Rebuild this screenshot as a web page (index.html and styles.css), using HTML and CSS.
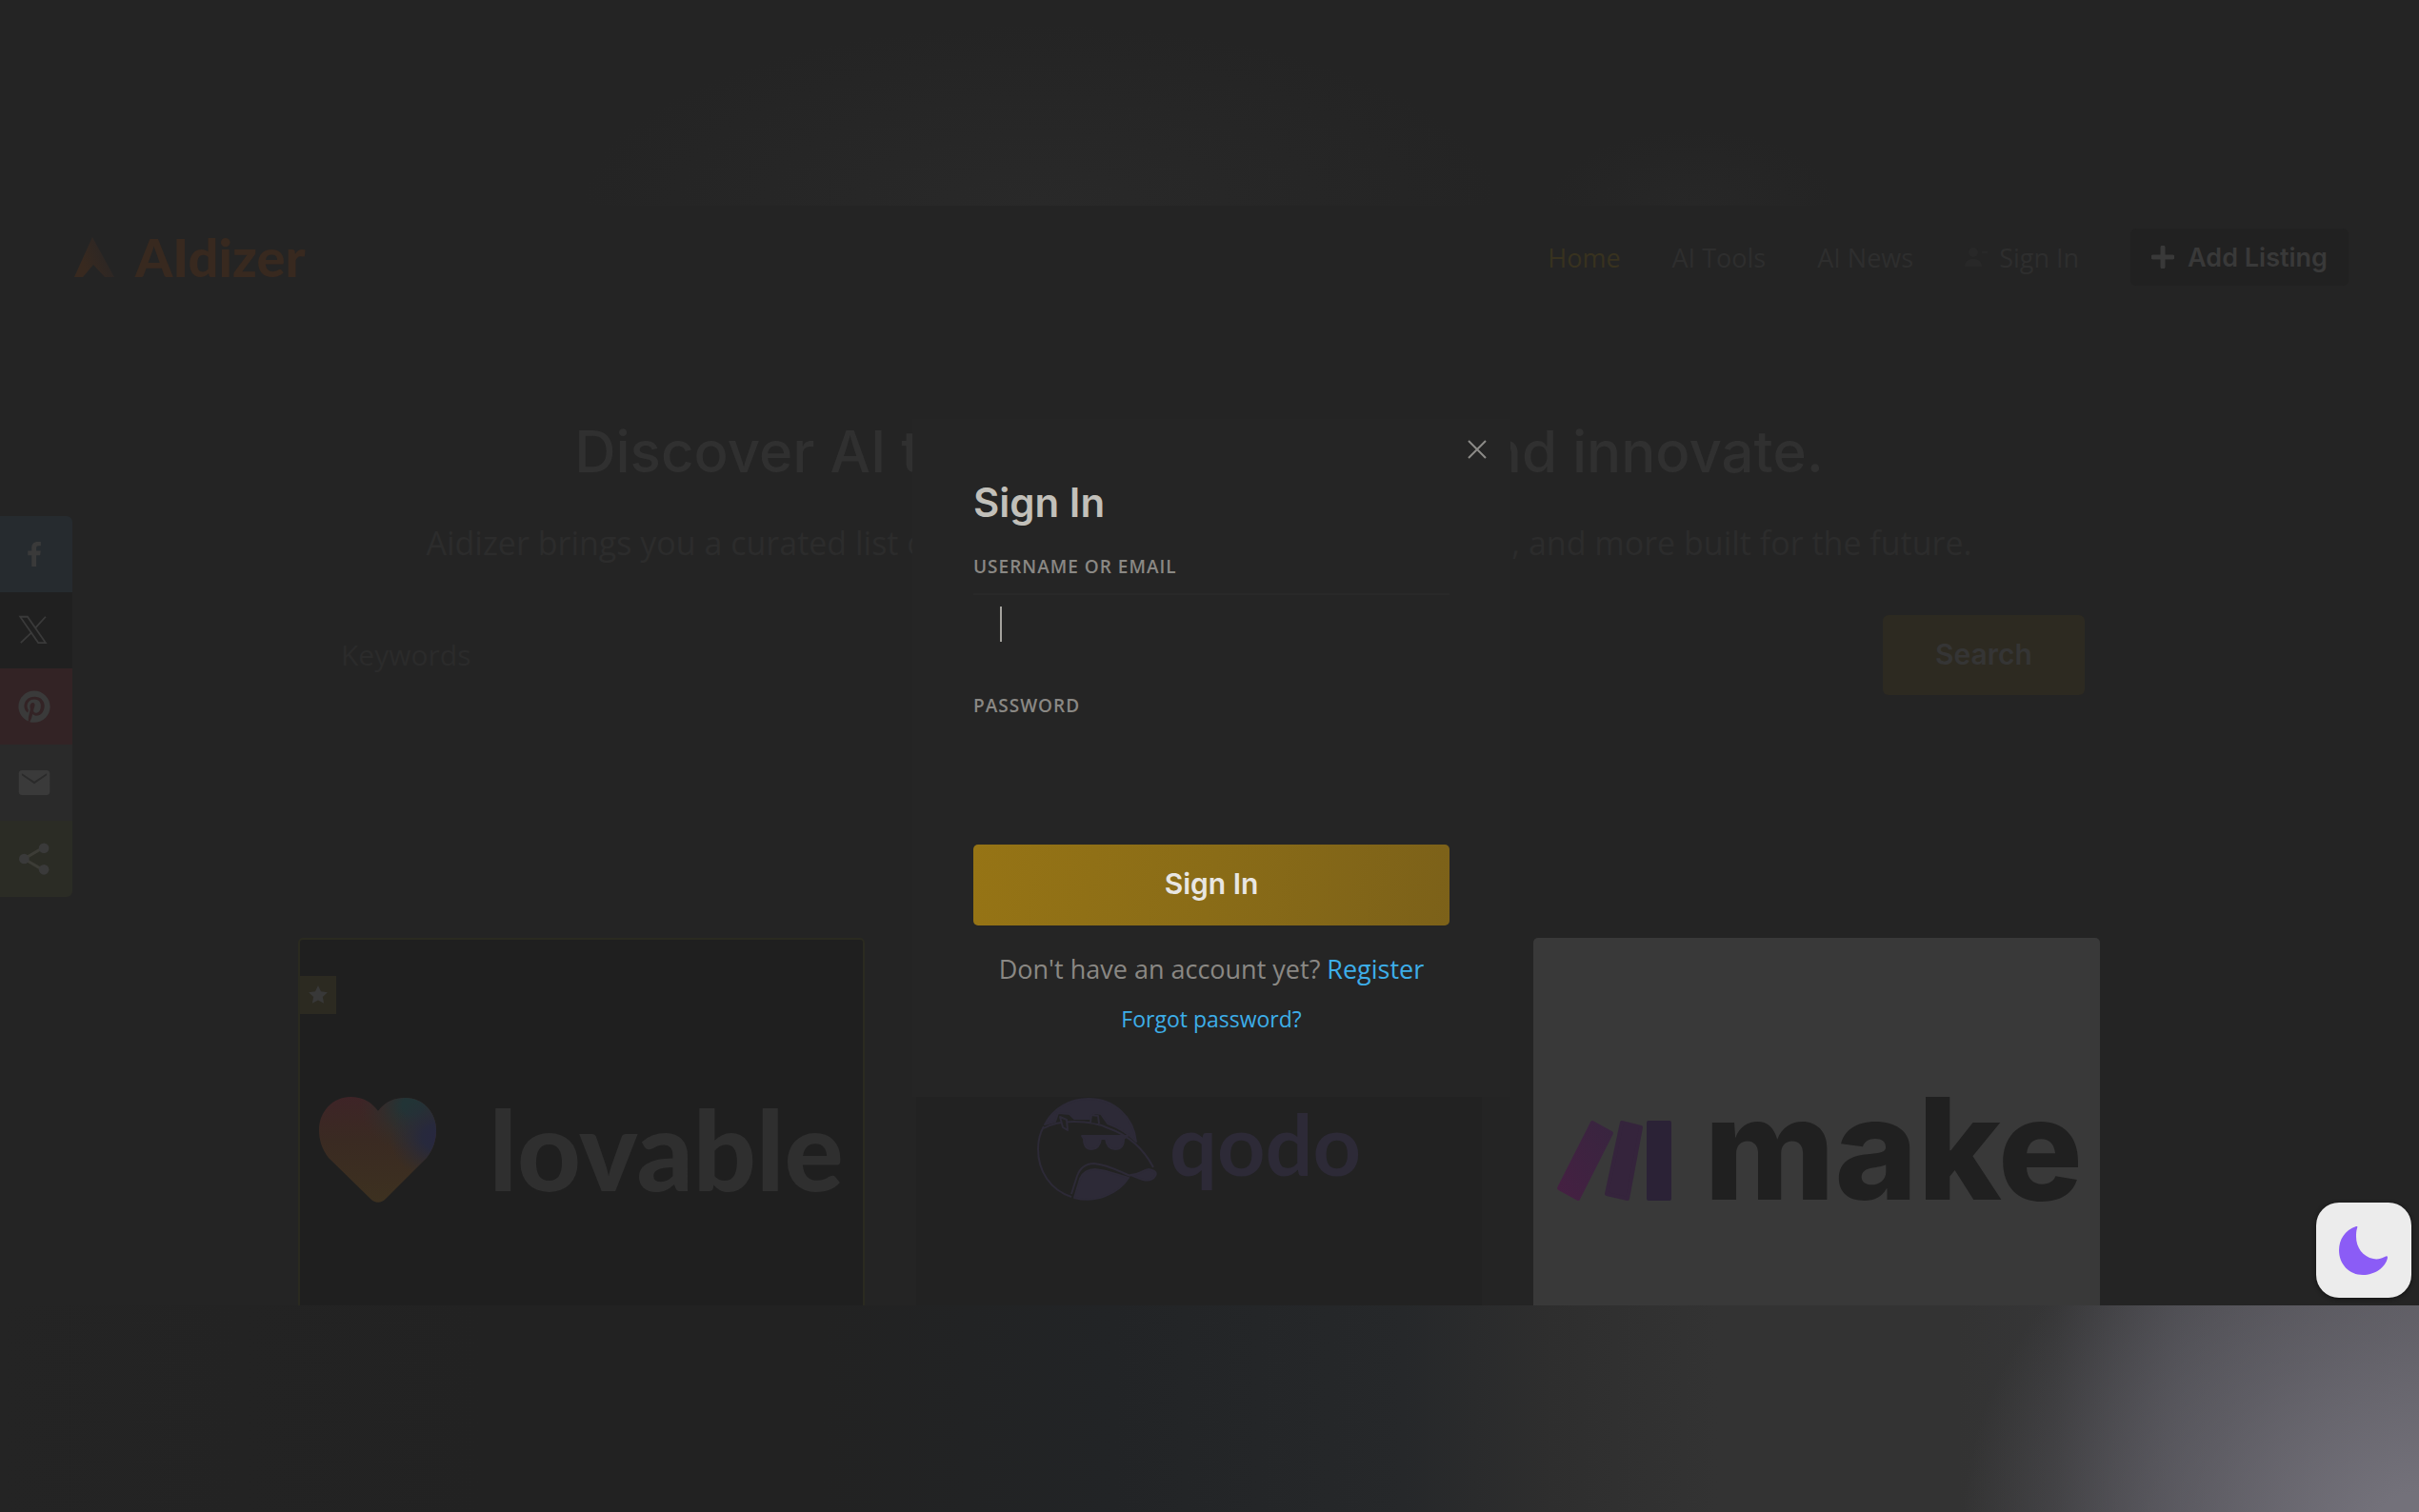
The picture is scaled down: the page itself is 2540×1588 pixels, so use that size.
FILE: index.html
```html
<!DOCTYPE html>
<html lang="en">
<head>
  <meta charset="UTF-8">
  <meta name="viewport" content="width=device-width, initial-scale=1.0">
  <title>AIdizer</title>
  <link rel="stylesheet" href="styles.css">
</head>
<body>
  <div class="site">
    <header class="header">
      <a href="#" class="logo">
        <svg width="42" height="42" viewBox="0 0 42 42" aria-hidden="true">
          <defs>
            <linearGradient id="mark" x1="0" y1="1" x2="1" y2="0.6">
              <stop offset="0.3" stop-color="#38291f"/>
              <stop offset="1" stop-color="#2a2625"/>
            </linearGradient>
          </defs>
          <path d="M19 0 L42 42 H32 L20 29 L9 42 H0 Z" fill="url(#mark)"/>
        </svg>
        <span>AIdizer</span>
      </a>
      <nav class="nav">
        <a href="#" class="active">Home</a>
        <a href="#">AI Tools</a>
        <a href="#">AI News</a>
        <a href="#" class="account">
          <svg width="24" height="24" viewBox="0 0 24 24" aria-hidden="true"><circle cx="9" cy="7" r="5"/><path d="M0 22c0-6 4-8 9-8s9 2 9 8zM18 6h6v2h-6z"/></svg>
          Sign In
        </a>
        <a href="#" class="add-listing">
          <svg width="24" height="24" viewBox="0 0 24 24" aria-hidden="true"><path d="M12 2v20M2 12h20"/></svg>
          Add Listing
        </a>
      </nav>
    </header>

    <main class="main">
      <h1>Discover AI tools to plan, create and innovate.</h1>
      <p class="subtitle">Aidizer brings you a curated list of AI tools, assistants, prompts, tutorials, and more built for the future.</p>

      <form class="search">
        <input type="text" name="keywords" placeholder="Keywords" aria-label="Keywords">
        <button type="submit">Search</button>
      </form>

      <div class="cards">
        <article class="card featured">
          <span class="badge">
            <svg width="22" height="22" viewBox="0 0 24 24" aria-hidden="true"><path d="M12 1l3.3 6.9 7.5 1-5.500 5.200 1.400 7.500L12 18l-6.700 3.600 1.400-7.500L1.200 8.900l7.500-1z"/></svg>
          </span>
          <svg width="123" height="111" viewBox="0 0 123 111" aria-hidden="true">
            <defs>
              <linearGradient id="heart" x1="0" y1="0" x2="0" y2="1">
                <stop offset="0" stop-color="#3e2427"/>
                <stop offset="0.4" stop-color="#3a2a22"/>
                <stop offset="1" stop-color="#3d3120"/>
              </linearGradient>
              <radialGradient id="heart-teal" cx="0.8" cy="0.08" r="0.45">
                <stop offset="0.2" stop-color="#223436"/>
                <stop offset="1" stop-color="#33302a" stop-opacity="0"/>
              </radialGradient>
              <radialGradient id="heart-blue" cx="1" cy="0.38" r="0.4">
                <stop offset="0" stop-color="#27273f"/>
                <stop offset="0.3" stop-color="#27293c"/>
                <stop offset="1" stop-color="#2b2d35" stop-opacity="0"/>
              </radialGradient>
            </defs>
            <path d="M62 15C70 4 80 1 91 1c18 0 32 15 32 34 0 10-3 20-10 29L70 107c-5 5-11 5-16 0L10 64C3 55 0 45 0 35 0 15 15 0 33 0c12 0 22 5 29 15z" fill="url(#heart)"/>
            <path d="M62 15C70 4 80 1 91 1c18 0 32 15 32 34 0 10-3 20-10 29L70 107c-5 5-11 5-16 0L10 64C3 55 0 45 0 35 0 15 15 0 33 0c12 0 22 5 29 15z" fill="url(#heart-teal)"/>
            <path d="M62 15C70 4 80 1 91 1c18 0 32 15 32 34 0 10-3 20-10 29L70 107c-5 5-11 5-16 0L10 64C3 55 0 45 0 35 0 15 15 0 33 0c12 0 22 5 29 15z" fill="url(#heart-blue)"/>
          </svg>
          <span class="lovable">lovable</span>
        </article>

        <article class="card centered">
          <svg width="126" height="108" viewBox="0 0 126 108" fill="none" stroke="#2d2a37" stroke-width="2" stroke-linejoin="round" aria-hidden="true">
            <path d="M36 104C14 97 1 77 1 54c0-9 2-17 6-24"/>
            <path fill="#2d2a37" d="M8 28C17 11 34 1 54 1c27 0 47 19 50 45-9-9-19-15-30-19l-7-10-7-1-3 6H39l-5-5-12-1-3 9z"/>
            <path d="M7 32c10-6 20-7 32-7 14 0 26 2 36 7 20 7 36 20 47 41"/>
            <path fill="#222" d="M24 20l7 3 1 11-5-3zM56 26l1-8 7 1 1 8"/>
            <path fill="#2d2a37" d="M47 40h48l-4 3c0 7-3 11-9 11s-9-4-10-11h-5c-1 7-4 11-10 11s-8-5-8-11z"/>
            <path d="M36 101l6-19c3-8 8-13 18-13 13 1 26 8 38 13"/>
            <path fill="#2d2a37" d="M39 105l6-20c3-7 8-10 16-10 12 1 24 6 35 9-11 17-35 27-57 21z"/>
            <path fill="#2d2a37" d="M98 81c9 0 12-5 19-6 7 1 9 4 7 7-3 5-9 5-13 4z"/>
          </svg>
          <span class="qodo">qodo</span>
        </article>

        <article class="card light">
          <svg width="122" height="88" viewBox="0 0 122 88" stroke-width="4" stroke-linejoin="round" aria-hidden="true">
            <defs>
              <linearGradient id="bars" x1="0" y1="1" x2="1" y2="0">
                <stop offset="0" stop-color="#452042"/>
                <stop offset="1" stop-color="#38253f"/>
              </linearGradient>
            </defs>
            <path d="M38 4l20 11-35 69L3 73z" fill="url(#bars)" stroke="url(#bars)"/>
            <path d="M69 4l20 5-14 75-22-5z" fill="#35243c" stroke="#35243c"/>
            <path d="M97 4h22v80H97z" fill="#2b2236" stroke="#2b2236"/>
          </svg>
          <span class="make">make</span>
        </article>
      </div>
    </main>

    <aside class="share">
      <a href="#" class="facebook" aria-label="Facebook"><svg width="38" height="38" viewBox="0 0 32 32"><path d="M17.800 27V17h3.400l.5-4h-3.900v-2.500c0-1.100.4-1.900 2-1.900h2V5.100c-.4 0-1.600-.1-3-.1-3 0-5.100 1.800-5.100 5.200V13h-3.400v4h3.400v10z"/></svg></a>
      <a href="#" class="x" aria-label="X"><svg width="38" height="38" viewBox="0 0 32 32"><path d="M3.500 4H10l16 23h-6.500zM26 4l-9.500 10.500M14 17.500L4 27" fill="none" stroke="#3a3a3a" stroke-width="1.500"/></svg></a>
      <a href="#" class="pinterest" aria-label="Pinterest"><svg width="38" height="38" viewBox="0 0 32 32"><path d="M16 2C8.300 2 2 8.300 2 16c0 5.900 3.700 11 8.900 13-.1-1.100-.2-2.800.1-4l1.600-7s-.4-.8-.4-2c0-1.900 1.100-3.400 2.500-3.400 1.200 0 1.800.9 1.800 2 0 1.200-.8 3-1.200 4.600-.3 1.400.7 2.500 2.100 2.500 2.500 0 4.400-2.600 4.400-6.400 0-3.400-2.400-5.700-5.800-5.700-4 0-6.300 3-6.300 6.100 0 1.200.5 2.500 1 3.200l.1.500-.4 1.600c-.1.300-.2.300-.5.200-1.700-.8-2.800-3.400-2.800-5.400 0-4.400 3.200-8.500 9.300-8.500 4.900 0 8.600 3.500 8.600 8.100 0 4.900-3 8.800-7.300 8.800-1.400 0-2.800-.7-3.200-1.600l-.9 3.400c-.3 1.200-1.200 2.700-1.700 3.600 1.300.4 2.700.6 4.100.6 7.700 0 14-6.300 14-14S23.700 2 16 2z"/></svg></a>
      <a href="#" class="email" aria-label="Email"><svg width="38" height="38" viewBox="0 0 32 32"><path d="M5 5h22c1.600 0 2.700 1.200 2.700 2.700v16.600c0 1.500-1.100 2.700-2.700 2.700H5c-1.600 0-2.700-1.200-2.700-2.700V7.700C2.300 6.200 3.400 5 5 5zm0 4.500l11 7.500 11-7.500v-1.700L16 15 5 7.800z"/></svg></a>
      <a href="#" class="sharethis" aria-label="Share"><svg width="38" height="38" viewBox="0 0 32 32"><path d="M7 16L24 6M7 16l17 10" fill="none" stroke="#3c3c36" stroke-width="2.500"/><circle cx="7" cy="16" r="4.500"/><circle cx="24.500" cy="6.500" r="4.500"/><circle cx="24.500" cy="25.500" r="4.500"/></svg></a>
    </aside>

    <button type="button" class="theme-toggle" aria-label="Toggle dark mode">
      <svg width="52" height="52" viewBox="0 0 52 52" aria-hidden="true"><path d="M18 1C6 5 0 15 0 26c0 15 11 26 25 26 13 0 24-8 26-18 0-2-1-2-3-1-4 2-8 3-12 2-11-2-18-12-18-23 0-3 0-6 1-9 1-2 0-2-1-2z" fill="#8b5cf6"/></svg>
    </button>
  </div>

  <!-- Sign in modal -->
  <div class="overlay">
    <div class="modal" role="dialog" aria-labelledby="modal-title">
      <button type="button" class="close-btn" aria-label="Close">
        <svg width="22" height="22" viewBox="0 0 22 22" aria-hidden="true"><path d="M2 2l18 18M20 2L2 20"/></svg>
      </button>
      <h2 id="modal-title">Sign In</h2>
      <form>
        <div class="field">
          <label for="username">Username or Email</label>
          <input type="text" id="username" name="username" class="focused">
          <span class="caret"></span>
        </div>
        <div class="field">
          <label for="password">Password</label>
          <input type="password" id="password" name="password">
        </div>
        <button type="submit" class="submit">Sign In</button>
      </form>
      <p class="register">Don't have an account yet? <a href="#">Register</a></p>
      <p class="forgot"><a href="#">Forgot password?</a></p>
    </div>
  </div>
</body>
</html>
```

FILE: styles.css
```css
* {
  box-sizing: border-box;
}

body {
  margin: 0;
  height: 100vh;
  padding: 216px 0 217px;
  overflow: hidden;
  font-family: "Open Sans", sans-serif;
  background:
    radial-gradient(480px 190px at 43% 216px, #292929, rgba(36, 36, 36, 0)) top / 100% 216px no-repeat,
    radial-gradient(150px 80px at 70% 216px, #272727, rgba(36, 36, 36, 0)) top / 100% 216px no-repeat,
    radial-gradient(480px 420px at 100% 110%, #73717a 10%, rgba(108, 106, 115, 0.6) 50%, rgba(80, 80, 85, 0)) bottom / 100% 217px no-repeat,
    linear-gradient(90deg, #242424, #222 20%, #222 34%, #222426 46%, #26282a 58%, #2e2e2e 64%, #333 71%, #333 81%, #363637 85%, #454549 90%, #555459) bottom / 100% 217px no-repeat,
    #242424;
}

a {
  text-decoration: none;
}

button {
  cursor: pointer;
}

.site {
  position: relative;
  height: 100%;
  overflow: hidden;
  background-color: #242424;
}

/* Header */
.header {
  display: flex;
  align-items: center;
  justify-content: space-between;
  height: 108px;
  padding: 0 74px 0 78px;
}

.logo {
  display: flex;
  align-items: center;
  gap: 22px;
  font-family: Lato, sans-serif;
  font-size: 56px;
  font-weight: 900;
  line-height: 60px;
  color: #38291f;
}

.nav {
  display: flex;
  align-items: center;
  gap: 54px;
  font-size: 27px;
}

.nav a {
  color: #2e2e2e;
}

.nav .active {
  color: #38321f;
}

.nav .account {
  display: flex;
  align-items: center;
  gap: 12px;
}

.account svg {
  fill: #282828;
}

.nav .add-listing {
  display: flex;
  align-items: center;
  gap: 14px;
  height: 60px;
  padding: 0 22px;
  border-radius: 6px;
  background-color: #212121;
  color: #393939;
  font-family: Inter, sans-serif;
  font-weight: 600;
}

.add-listing svg {
  stroke: #393939;
  stroke-width: 5;
  stroke-linecap: round;
}

/* Hero */
.main {
  padding: 114px 22px 0 0;
  text-align: center;
}

h1 {
  margin: 0;
  font-family: Inter, sans-serif;
  font-size: 60px;
  font-weight: 500;
  line-height: 72px;
  color: #303030;
  white-space: nowrap;
}

.subtitle {
  margin: 36px 0 0;
  font-size: 34px;
  line-height: 48px;
  color: #2c2c2c;
  white-space: nowrap;
}

.search {
  display: flex;
  max-width: 1860px;
  height: 84px;
  margin: 52px auto 0;
}

.search input {
  flex: 1;
  padding: 0 29px 2px;
  border: none;
  outline: none;
  background: transparent;
  font-family: inherit;
  font-size: 30px;
}

.search input::placeholder {
  color: #2b2b2b;
}

.search button {
  width: 212px;
  padding-bottom: 3px;
  border: none;
  border-radius: 6px;
  background-color: #2d2a21;
  color: #353535;
  font-family: Inter, sans-serif;
  font-size: 30px;
  font-weight: 600;
}

/* Cards */
.cards {
  display: grid;
  grid-template-columns: repeat(3, 1fr);
  gap: 54px;
  max-width: 1892px;
  margin: 255px auto 0;
}

.card {
  position: relative;
  display: flex;
  align-items: center;
  justify-content: space-between;
  height: 444px;
  padding: 0 20px;
  border-radius: 5px;
  background-color: #222;
  font-family: Lato, sans-serif;
  line-height: 1;
}

.featured {
  border: 2px solid #2a2a20;
  background-color: #1f1f1f;
}

.centered {
  justify-content: center;
  gap: 13px;
}

.light {
  padding: 0 18px 0 24px;
  background-color: #393939;
}

.light svg {
  margin-top: 24px;
}

.badge {
  position: absolute;
  top: 38px;
  left: 0;
  display: flex;
  align-items: center;
  justify-content: center;
  width: 38px;
  height: 40px;
  background-color: #2c2a21;
}

.badge svg {
  fill: #383838;
}

.lovable {
  font-size: 116px;
  font-weight: 900;
  color: #2f2f2f;
}

.qodo {
  padding-bottom: 12px;
  font-size: 88px;
  font-weight: 700;
  color: #2d2a37;
}

.make {
  font-family: Inter, sans-serif;
  font-size: 148px;
  font-weight: 800;
  color: #202020;
}

/* Share buttons */
.share {
  position: absolute;
  top: 326px;
  left: 0;
  width: 76px;
  border-radius: 0 6px 6px 0;
  overflow: hidden;
}

.share a {
  display: flex;
  align-items: center;
  justify-content: center;
  height: 80px;
  padding-right: 4px;
  fill: #3a3a3a;
}

.facebook {
  background-color: #262b2f;
}

.x {
  background-color: #202020;
}

.pinterest {
  background-color: #332325;
}

.email {
  background-color: #2a2a2a;
}

.sharethis {
  background-color: #2b2c25;
}

.theme-toggle {
  position: absolute;
  right: 8px;
  bottom: 8px;
  display: flex;
  align-items: center;
  justify-content: center;
  width: 100px;
  height: 100px;
  padding: 0;
  border: none;
  border-radius: 24px;
  background-color: #ececec;
  box-shadow: 0 1px 4px #111;
}

/* Modal */
.overlay {
  position: fixed;
  inset: 0;
  display: flex;
  align-items: center;
  justify-content: center;
  padding: 4px 0 0 4px;
  pointer-events: none;
}

.modal {
  position: relative;
  width: 628px;
  padding: 64px;
  background-color: #252525;
  pointer-events: auto;
}

.close-btn {
  position: absolute;
  top: 21px;
  right: 24px;
  display: flex;
  padding: 0;
  border: none;
  background: none;
}

.close-btn svg {
  stroke: #8c8b88;
  stroke-width: 2;
}

.modal h2 {
  margin: 0 0 29px;
  font-family: Inter, sans-serif;
  font-size: 42px;
  font-weight: 600;
  line-height: 48px;
  color: #c2c0ba;
}

.field {
  position: relative;
  margin-bottom: 38px;
}

.field label {
  display: block;
  margin-bottom: 14px;
  font-size: 19px;
  font-weight: 600;
  line-height: 28px;
  letter-spacing: 1px;
  text-transform: uppercase;
  color: #8a8884;
}

.field input {
  display: block;
  width: 100%;
  height: 66px;
  padding: 0 28px;
  border: none;
  border-top: 2px solid transparent;
  outline: none;
  background: transparent;
  color: #c2c0ba;
  font-size: 27px;
}

.field .focused {
  border-color: #292929;
}

.caret {
  position: absolute;
  left: 28px;
  bottom: 15px;
  width: 2px;
  height: 37px;
  background-color: #a5a39e;
}

.submit {
  display: block;
  width: 100%;
  height: 85px;
  margin-top: 52px;
  padding-bottom: 4px;
  border: none;
  border-radius: 5px;
  background: linear-gradient(100deg, #967415, #8a6c17 50%, #7c6119);
  color: #e8e6e3;
  font-family: Inter, sans-serif;
  font-size: 30px;
  font-weight: 600;
}

.register,
.forgot {
  margin: 28px 0 0;
  font-size: 27px;
  line-height: 36px;
  text-align: center;
  color: #8a8884;
}

.forgot {
  margin-top: 16px;
  font-size: 23px;
}

.modal a {
  color: #3daee9;
}
```
